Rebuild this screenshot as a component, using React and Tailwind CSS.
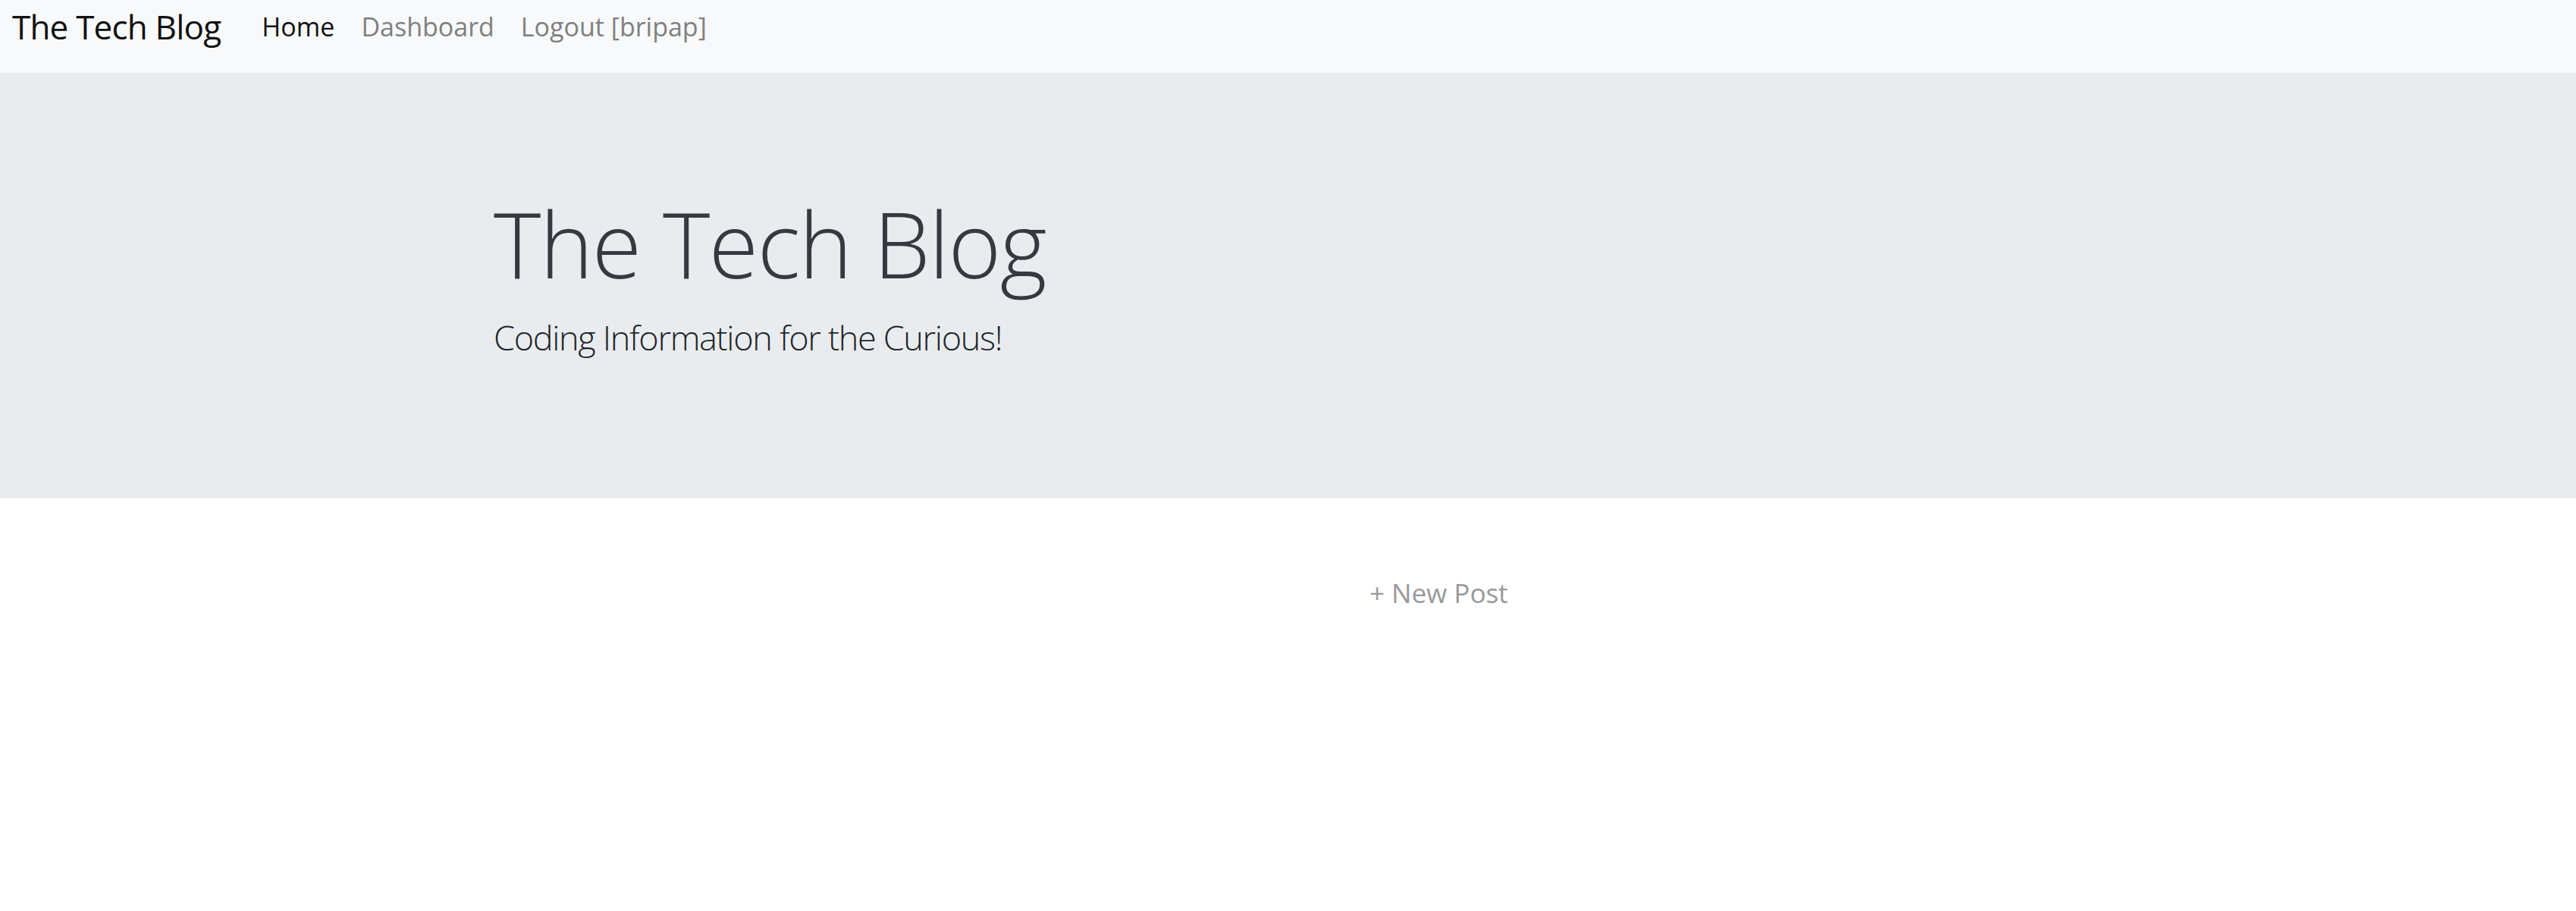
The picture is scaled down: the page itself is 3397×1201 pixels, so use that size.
import React from 'react';

const font = { fontFamily: '"Open Sans", "Noto Sans", sans-serif' };

function Navbar() {
  return (
    <nav className="h-[96px] bg-[#f8f9fa] pt-[13px] pl-[16px]">
      <div className="flex items-center">
        <a href="#" className="text-[44px] leading-none tracking-[-0.8px] text-[#111] mr-[54px]">The Tech Blog</a>
        <ul className="flex items-center gap-[35px] text-[34px] leading-none">
          <li><a href="#" className="text-[#111]">Home</a></li>
          <li><a href="#" className="text-[#808080]">Dashboard</a></li>
          <li><a href="#" className="text-[#808080]">Logout [bripap]</a></li>
        </ul>
      </div>
    </nav>
  );
}

function Hero() {
  return (
    <header className="h-[561px] bg-[#e9ecef] pt-[166px] pl-[651px]">
      <h1 className="text-[119px] leading-none font-light tracking-[-1.5px] text-[#343a40]">The Tech Blog</h1>
      <p className="mt-[41px] text-[45px] leading-none font-light tracking-[-1.3px] text-[#212529]">Coding Information for the Curious!</p>
    </header>
  );
}

export default function App() {
  return (
    <div className="min-h-[1201px] bg-white" style={font}>
      <Navbar />
      <Hero />
      <main className="pt-[107px] pl-[1806px]">
        <a href="#" className="text-[35px] leading-none text-[#999]">+ New Post</a>
      </main>
    </div>
  );
}
